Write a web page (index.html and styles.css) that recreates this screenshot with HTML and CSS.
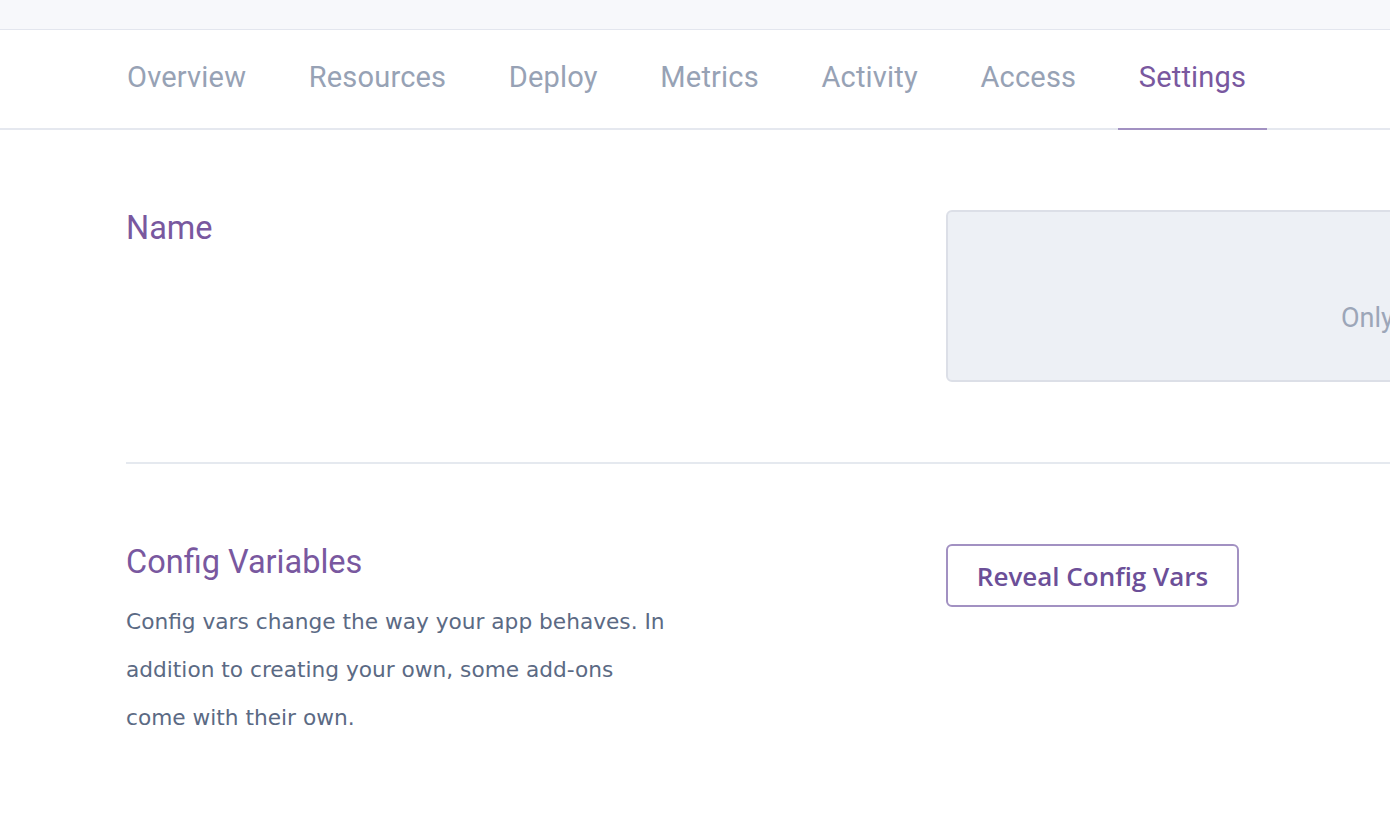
FILE: index.html
```html
<!DOCTYPE html>
<html lang="en">
<head>
<meta charset="utf-8">
<title>Settings</title>
<link rel="stylesheet" href="styles.css">
</head>
<body>
<div class="topbar"></div>
<nav class="tabs">
  <a class="tab">Overview</a>
  <a class="tab">Resources</a>
  <a class="tab">Deploy</a>
  <a class="tab">Metrics</a>
  <a class="tab">Activity</a>
  <a class="tab">Access</a>
  <a class="tab active">Settings</a>
</nav>
<main class="content">
  <section class="row row-name">
    <div class="label-col">
      <h2 class="heading">Name</h2>
    </div>
    <div class="field-col">
      <div class="name-box"><span class="name-hint">Only</span></div>
    </div>
  </section>
  <hr class="divider">
  <section class="row row-config">
    <div class="label-col">
      <h2 class="heading">Config Variables</h2>
      <p class="desc">Config vars change the way your app behaves. In addition to creating your own, some add-ons come with their own.</p>
    </div>
    <div class="field-col">
      <button class="btn">Reveal Config Vars</button>
    </div>
  </section>
</main>
</body>
</html>
```
FILE: styles.css
```css
html, body {
  margin: 0;
  padding: 0;
  background: #ffffff;
  overflow: hidden;
  width: 1390px;
  height: 820px;
}
body {
  font-family: Roboto, "Liberation Sans", sans-serif;
}
.topbar {
  height: 29px;
  background: #f7f8fb;
  border-bottom: 1px solid #e3e6ee;
}
.tabs {
  display: flex;
  gap: 20.5px;
  padding-left: 106px;
  height: 98px;
  border-bottom: 2px solid #e5e8ef;
  box-sizing: content-box;
}
.tab {
  display: flex;
  align-items: center;
  padding: 0 21px 5px;
  font-size: 29px;
  color: #97a2b5;
  margin-bottom: -2px;
  border-bottom: 2px solid transparent;
  letter-spacing: 0.2px;
}
.tab.active {
  color: #79589f;
  border-bottom-color: #a291c2;
}
.content {
  padding-left: 126px;
}
.row {
  display: grid;
  grid-template-columns: 820px 620px;
}
.row-name {
  padding-top: 80px;
  height: 332px;
  box-sizing: border-box;
}
.heading {
  margin: 0;
  font-weight: 400;
  font-size: 32.5px;
  color: #79589f;
  line-height: 36px;
}
.name-box {
  height: 168px;
  background: #edf0f5;
  border: 2px solid #dcdfe7;
  border-radius: 6px;
  position: relative;
}
.name-hint {
  position: absolute;
  left: 393px;
  top: 90px;
  font-size: 27px;
  color: #9ca6b8;
}
.divider {
  margin: 0;
  border: 0;
  border-top: 2px solid #e5e9ef;
}
.row-config {
  padding-top: 80px;
}
.desc {
  margin: 18px 0 0;
  width: 546px;
  font-family: "DejaVu Sans", sans-serif;
  font-size: 21.7px;
  line-height: 48px;
  color: #5b6a84;
}
.btn {
  width: 293px;
  height: 63px;
  background: #fff;
  border: 2px solid #a291c2;
  border-radius: 6px;
  font-family: "Open Sans", sans-serif;
  font-weight: 600;
  font-size: 26px;
  color: #6c4f98;
  padding: 0;
}
```
